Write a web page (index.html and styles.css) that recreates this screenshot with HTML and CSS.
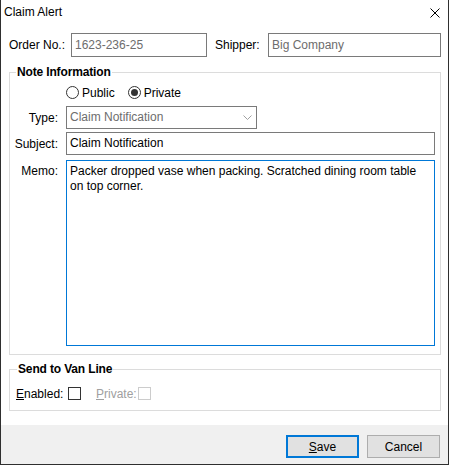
FILE: index.html
```html
<!DOCTYPE html>
<html>
<head>
<meta charset="utf-8">
<title>Claim Alert</title>
<link rel="stylesheet" href="styles.css">
</head>
<body>
<div class="window">
  <div class="titlebar">
    <span class="title">Claim Alert</span>
    <svg class="close" width="10" height="10" viewBox="0 0 10 10"><path d="M0.5 0.5 L9.5 9.5 M9.5 0.5 L0.5 9.5" stroke="#000" stroke-width="1" fill="none"/></svg>
  </div>
  <div class="content">
    <div class="order-row">
      <span class="lbl-order">Order No.:</span>
      <div class="box readonly order-box">1623-236-25</div>
      <span class="lbl-shipper">Shipper:</span>
      <div class="box readonly shipper-box">Big Company</div>
    </div>

    <fieldset class="group note-group">
      <legend class="legend note-legend">Note Information</legend>
      <div class="note-body">
        <div class="row radio-row">
          <span class="lbl"></span>
          <span class="radio"></span><span class="radio-text">Public</span>
          <span class="radio checked"></span><span class="radio-text">Private</span>
        </div>
        <div class="row type-row">
          <span class="lbl">Type:</span>
          <div class="box readonly select-box"><span>Claim Notification</span>
            <svg class="chev" width="9" height="6" viewBox="0 0 9 6"><polyline points="0.5,0.5 4.5,4.5 8.5,0.5" stroke="#a0a0a0" stroke-width="1" fill="none"/></svg>
          </div>
        </div>
        <div class="row subject-row">
          <span class="lbl">Subject:</span>
          <div class="box subject-box">Claim Notification</div>
        </div>
        <div class="row memo-row">
          <span class="lbl lbl-memo">Memo:</span>
          <div class="box memo-box">Packer dropped vase when packing. Scratched dining room table<br>on top corner.</div>
        </div>
      </div>
    </fieldset>

    <fieldset class="group van-group">
      <legend class="legend van-legend">Send to Van Line</legend>
      <div class="van-row">
        <span class="lbl-enabled"><u>E</u>nabled:</span>
        <span class="check"></span>
        <span class="lbl-private"><u>P</u>rivate:</span>
        <span class="check disabled"></span>
      </div>
    </fieldset>
  </div>
  <div class="footer">
    <button class="btn btn-default"><u>S</u>ave</button>
    <button class="btn">Cancel</button>
  </div>
</div>
</body>
</html>
```

FILE: styles.css
```css
html, body {
  margin: 0;
  padding: 0;
  background: #ffffff;
}

body {
  font-family: "Liberation Sans", Arial, sans-serif;
  font-size: 12px;
  color: #000;
}

.window {
  width: 449px;
  height: 465px;
  box-sizing: border-box;
  border-left: 1px solid #2f2f2f;
  border-right: 1px solid #2f2f2f;
  border-bottom: 1px solid #2f2f2f;
  background: #fff;
  display: flex;
  flex-direction: column;
}

.titlebar {
  height: 24px;
  display: flex;
  align-items: center;
  justify-content: space-between;
  padding: 0 8px 0 3px;
}

.title {
  line-height: 24px;
}

.close {
  display: block;
  margin-top: 1px;
}

.content {
  flex: 1;
  padding: 9px 7px 0 8px;
}

.order-row {
  display: flex;
  align-items: center;
  height: 24px;
}

.lbl-order {
  width: 62px;
}

.lbl-shipper {
  width: 53px;
  margin-left: 8px;
}

.box {
  box-sizing: border-box;
  border: 1px solid #7a7a7a;
  background: #fff;
  padding: 0 3px;
  white-space: nowrap;
}

.readonly {
  color: #6d6d6d;
}

.order-box {
  width: 136px;
  height: 24px;
  line-height: 22px;
}

.shipper-box {
  flex: 1;
  height: 24px;
  line-height: 22px;
}

.group {
  margin: 0;
  padding: 0;
  border: 1px solid #dcdcdc;
  min-width: 0;
}

.legend {
  font-weight: bold;
  line-height: 14px;
  padding: 0 1px;
  letter-spacing: -0.15px;
}

.note-group {
  margin-top: 8px;
}

.note-legend {
  margin-left: 6px;
}

.note-body {
  padding: 7px 5px 8px 0;
}

.row {
  display: flex;
  align-items: center;
}

.lbl {
  width: 48px;
  margin-right: 8px;
  text-align: right;
  flex: none;
}

.radio-row {
  height: 13px;
}

.radio {
  box-sizing: border-box;
  width: 13px;
  height: 13px;
  border: 1px solid #333;
  border-radius: 50%;
  background: #fff;
  display: flex;
  align-items: center;
  justify-content: center;
  flex: none;
}

.radio.checked::after {
  content: "";
  width: 7px;
  height: 7px;
  border-radius: 50%;
  background: #333;
}

.radio-text {
  margin-left: 3px;
  margin-right: 13px;
  line-height: 14px;
}

.type-row {
  margin-top: 7px;
  height: 23px;
}

.select-box {
  width: 191px;
  height: 23px;
  line-height: 21px;
  display: flex;
  align-items: center;
  justify-content: space-between;
  padding-right: 4px;
}

.chev {
  display: block;
}

.subject-row {
  margin-top: 3px;
  height: 23px;
}

.subject-box {
  flex: 1;
  height: 23px;
  line-height: 21px;
}

.memo-row {
  margin-top: 5px;
  align-items: flex-start;
}

.lbl-memo {
  margin-top: 4px;
}

.memo-box {
  flex: 1;
  height: 186px;
  border-color: #0078d7;
  white-space: normal;
  line-height: 15px;
  padding: 3px 3px;
}

.van-group {
  margin-top: 7px;
}

.van-legend {
  margin-left: 7px;
}

.van-row {
  display: flex;
  align-items: center;
  height: 13px;
  padding: 11px 0 10px 6px;
}

.lbl-enabled {
  width: 52px;
}

.lbl-private {
  width: 42px;
  margin-left: 15px;
  color: #a0a0a0;
}

.check {
  box-sizing: border-box;
  width: 13px;
  height: 13px;
  border: 1px solid #333;
  background: #fff;
  flex: none;
}

.check.disabled {
  border-color: #cccccc;
}

.footer {
  height: 39px;
  box-sizing: border-box;
  background: #f0f0f0;
  display: flex;
  justify-content: flex-end;
  align-items: flex-start;
  gap: 8px;
  padding: 10px 8px 0 0;
}

.btn {
  box-sizing: border-box;
  width: 73px;
  height: 23px;
  margin: 0;
  padding: 0;
  background: #e1e1e1;
  border: 1px solid #adadad;
  font-family: "Liberation Sans", Arial, sans-serif;
  font-size: 12px;
  color: #000;
}

.btn-default {
  border: 2px solid #0078d7;
}
```
